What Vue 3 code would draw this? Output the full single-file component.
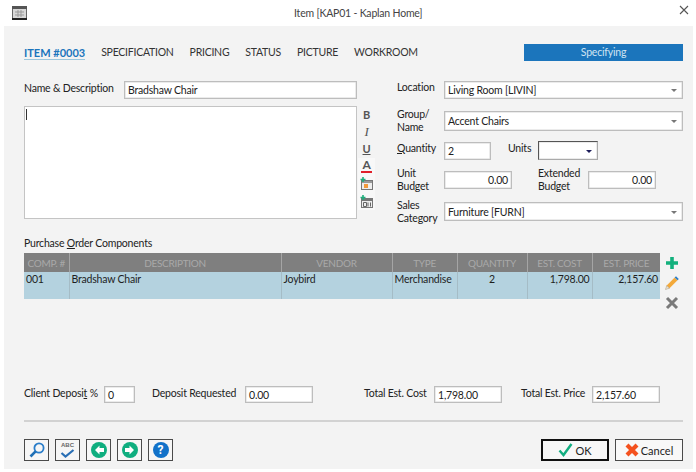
<script setup>
const tabs = ["SPECIFICATION", "PRICING", "STATUS", "PICTURE", "WORKROOM"];

const columns = [
  { label: "COMP. #", width: 45 },
  { label: "DESCRIPTION", width: 212 },
  { label: "VENDOR", width: 111 },
  { label: "TYPE", width: 65 },
  { label: "QUANTITY", width: 70 },
  { label: "EST. COST", width: 65 },
  { label: "EST. PRICE", width: 68 },
];
</script>

<template>
  <div class="window">
    <header class="titlebar">
      <div class="title-left">
        <svg width="15" height="14" viewBox="0 0 15 14">
          <rect x="0.5" y="1" width="14" height="12" fill="#d8d8d8" stroke="#666" />
          <rect x="0" y="0" width="15" height="3" fill="#555" />
          <rect x="0" y="12" width="15" height="2" fill="#222" />
          <path d="M3 6h9M3 9h9M6 4v7M9 4v7" stroke="#999" fill="none" />
        </svg>
      </div>
      <div class="title-text">Item [KAP01 - Kaplan Home]</div>
      <div class="title-right">
        <svg width="10" height="10" viewBox="0 0 10 10">
          <path d="M1 1l8 8M9 1l-8 8" stroke="#555" stroke-width="1.1" fill="none" />
        </svg>
      </div>
    </header>

    <main class="body">
      <nav class="tabs">
        <span class="tab active">ITEM #0003</span>
        <span v-for="t in tabs" :key="t" class="tab">{{ t }}</span>
        <span class="status">Specifying</span>
      </nav>

      <section class="form">
        <div class="left">
          <div class="name-row">
            <label class="name-label">Name &amp; Description</label>
            <div class="field name-input">Bradshaw Chair</div>
          </div>
          <div class="desc-row">
            <div class="textarea"><span class="caret"></span></div>
            <div class="format-tools">
              <span class="fmt bold">B</span>
              <span class="fmt ital">I</span>
              <span class="fmt under">U</span>
              <div class="fmt-lower">
                <span class="fmt color">A</span>
                <svg width="13" height="13" viewBox="0 0 13 13">
                  <rect x="1.5" y="3.5" width="11" height="9" fill="#eee" stroke="#777" />
                  <rect x="2" y="4" width="10" height="2" fill="#999" />
                  <rect x="4" y="7" width="4" height="4" fill="#f39a3c" />
                  <path d="M3 0v5M0.5 2.5h5" stroke="#1fae7c" stroke-width="1.6" />
                </svg>
                <svg width="13" height="13" viewBox="0 0 13 13">
                  <rect x="1.5" y="3.5" width="11" height="9" fill="#eee" stroke="#777" />
                  <rect x="2" y="4" width="10" height="2" fill="#777" />
                  <path d="M3.5 7.5h3v4h-3zM8 7.5v4M10.5 7.5v4" stroke="#666" fill="none" />
                  <path d="M3 0v5M0.5 2.5h5" stroke="#1fae7c" stroke-width="1.6" />
                </svg>
              </div>
            </div>
          </div>
        </div>

        <div class="right">
          <div class="row row-location">
            <label class="lbl raised">Location</label>
            <div class="field select wide">Living Room [LIVIN]<i class="arrow"></i></div>
          </div>
          <div class="row row-group">
            <label class="lbl">Group/<br />Name</label>
            <div class="field select wide tall">Accent Chairs<i class="arrow"></i></div>
          </div>
          <div class="row row-qty">
            <label class="lbl raised"><u>Q</u>uantity</label>
            <div class="field qty">2</div>
            <label class="units-lbl">Units</label>
            <div class="field select units"><i class="arrow dark"></i></div>
          </div>
          <div class="row row-budget">
            <label class="lbl">Unit<br />Budget</label>
            <div class="field money num">0.00</div>
            <label class="ext-lbl">Extended<br />Budget</label>
            <div class="field money num">0.00</div>
          </div>
          <div class="row row-sales">
            <label class="lbl">Sales<br />Category</label>
            <div class="field select wide">Furniture [FURN]<i class="arrow"></i></div>
          </div>
        </div>
      </section>

      <div class="grid-title">Purchase <u>O</u>rder Components</div>
      <div class="grid-wrap">
        <table class="grid">
          <colgroup>
            <col v-for="c in columns" :key="c.label" :style="{ width: c.width + 'px' }" />
          </colgroup>
          <thead>
            <tr>
              <th v-for="c in columns" :key="c.label">{{ c.label }}</th>
            </tr>
          </thead>
          <tbody>
            <tr>
              <td>001</td>
              <td>Bradshaw Chair</td>
              <td>Joybird</td>
              <td>Merchandise</td>
              <td class="center">2</td>
              <td class="num">1,798.00</td>
              <td class="num">2,157.60</td>
            </tr>
          </tbody>
        </table>
        <div class="grid-tools">
          <svg width="16" height="16" viewBox="0 0 16 16">
            <path d="M8 2v12M2 8h12" stroke="#12b07c" stroke-width="3.6" fill="none" />
          </svg>
          <svg width="16" height="16" viewBox="0 0 16 16">
            <path d="M1.5 14.5l1.2-4 8-8 2.8 2.8-8 8z" fill="#f3a93a" />
            <path d="M10.7 2.5l1.3-1.3 2.8 2.8-1.3 1.3z" fill="#2a7dc9" />
            <path d="M1.5 14.5l1.2-4 2.8 2.8z" fill="#e8e0d0" stroke="#999" stroke-width="0.4" />
          </svg>
          <svg width="16" height="16" viewBox="0 0 16 16">
            <path d="M3 3l10 10M13 3L3 13" stroke="#7a7a7a" stroke-width="3" fill="none" />
          </svg>
        </div>
      </div>

      <div class="totals">
        <label class="client-lbl">Client Deposi<u>t</u> %</label>
        <div class="field pct">0</div>
        <label class="deposit-lbl">Deposit Requested</label>
        <div class="field total">0.00</div>
        <label class="cost-lbl">Total Est. Cost</label>
        <div class="field total">1,798.00</div>
        <label class="price-lbl">Total Est. Price</label>
        <div class="field total">2,157.60</div>
      </div>

      <hr class="divider" />

      <footer class="footer">
        <button class="tool">
          <svg width="18" height="18" viewBox="0 0 18 18">
            <circle cx="11" cy="7" r="4.6" fill="none" stroke="#2a7dc9" stroke-width="1.8" />
            <path d="M7.6 10.4L2.5 15.5" stroke="#1f6fb5" stroke-width="2.6" />
          </svg>
        </button>
        <button class="tool abc">
          <span class="abc-text">ABC</span>
          <svg width="15" height="9" viewBox="0 0 15 9">
            <path d="M1.5 4l4 3.5 8-6.5" stroke="#2a6fb5" stroke-width="2.2" fill="none" />
          </svg>
        </button>
        <button class="tool">
          <svg width="18" height="18" viewBox="0 0 18 18">
            <circle cx="9" cy="9" r="8" fill="#0fae7f" />
            <path d="M9.500 4.500L5 9l4.500 4.500V11H14V7H9.500z" fill="#fff" />
          </svg>
        </button>
        <button class="tool">
          <svg width="18" height="18" viewBox="0 0 18 18">
            <circle cx="9" cy="9" r="8" fill="#0fae7f" />
            <path d="M8.500 4.500L13 9l-4.500 4.500V11H4V7h4.500z" fill="#fff" />
          </svg>
        </button>
        <button class="tool">
          <span class="help">?</span>
        </button>
        <div class="spacer"></div>
        <button class="action ok">
          <svg width="15" height="14" viewBox="0 0 15 14">
            <path d="M1.500 7.500l4 4.500 8-11" stroke="#12ae80" stroke-width="2.400" fill="none" />
          </svg>
          <span>OK</span>
        </button>
        <button class="action cancel">
          <svg width="14" height="14" viewBox="0 0 14 14">
            <path d="M2 2l10 10M12 2L2 12" stroke="#f4511e" stroke-width="4.200" fill="none" />
          </svg>
          <span>Cancel</span>
        </button>
      </footer>
    </main>
  </div>
</template>

<style>
html,
body {
  margin: 0;
  background: #fff;
}
</style>

<style scoped>
.window {
  width: 696px;
  height: 472px;
  background: #fff;
  font-family: Lato, Roboto, "Liberation Sans", sans-serif;
  font-size: 10.5px;
  letter-spacing: -0.2px;
  color: #222;
  overflow: hidden;
}

.titlebar {
  height: 26px;
  display: grid;
  grid-template-columns: 294px auto 1fr;
  align-items: center;
}
.title-left {
  padding-left: 12px;
  display: flex;
}
.title-text {
  color: #444;
}
.title-right {
  display: flex;
  justify-content: flex-end;
  padding-right: 7px;
  margin-top: -7px;
}

.body {
  margin: 0 3px 0 4px;
  height: 443px;
  background: #f3f3f3;
  padding: 0 10px 0 20px;
  box-sizing: border-box;
}

.tabs {
  display: flex;
  align-items: center;
  height: 18px;
  padding-top: 17px;
  letter-spacing: -0.25px;
}
.tab {
  margin-right: 16px;
  color: #333;
  white-space: nowrap;
}
.tab.active {
  color: #1b75bc;
  font-size: 11px;
  letter-spacing: 0;
  font-weight: 700;
  border-bottom: 1px solid #9cc7dd;
  margin-top: 2px;
}
.status {
  margin-left: auto;
  width: 159px;
  height: 17px;
  line-height: 17px;
  background: #1b75bc;
  color: #cfe3f2;
  text-align: center;
  letter-spacing: -0.2px;
}

.form {
  display: flex;
  margin-top: 20px;
}
.left {
  width: 333px;
}
.name-row {
  display: flex;
  align-items: center;
  height: 17px;
}
.name-label {
  width: 100px;
  margin-top: -4px;
  white-space: nowrap;
}
.name-input {
  width: 233px;
  height: 17px;
}
.desc-row {
  display: flex;
  margin-top: 8px;
}
.textarea {
  flex: 0 0 333px;
  height: 113px;
  box-sizing: border-box;
  background: #fff;
  border: 1px solid #c4c4c4;
  padding: 2px 1px;
}
.caret {
  display: block;
  width: 1px;
  height: 11px;
  background: #333;
}
.format-tools {
  flex: 0 0 17px;
  margin-left: 1px;
  display: flex;
  flex-direction: column;
  align-items: center;
}
.fmt {
  height: 17px;
  line-height: 17px;
  font-size: 11px;
  color: #555;
  font-weight: 700;
}
.fmt.ital {
  font-family: "Liberation Serif", serif;
  font-style: italic;
  font-weight: 400;
  font-size: 13px;
}
.fmt.under {
  text-decoration: underline;
}
.fmt-lower {
  width: 17px;
  margin-top: 1px;
  background: #f8f8f8;
  display: flex;
  flex-direction: column;
  align-items: center;
  gap: 5px;
  padding-bottom: 2px;
}
.fmt.color {
  height: 15px;
  line-height: 14px;
  font-size: 12px;
  border-bottom: 2px solid #e0202a;
  box-sizing: border-box;
  padding: 0 1px;
  margin-bottom: -1px;
}

.right {
  width: 286px;
  margin-left: 40px;
}
.row {
  display: flex;
  align-items: center;
}
.row-location {
  height: 18px;
}
.row-group {
  margin-top: 12px;
  height: 20px;
}
.row-qty {
  margin-top: 10px;
  height: 19px;
}
.row-budget {
  margin-top: 11px;
  height: 18px;
}
.row-sales {
  margin-top: 13px;
  height: 19px;
}
.lbl {
  width: 47px;
  flex: none;
  line-height: 13px;
}
.lbl.raised {
  margin-top: -5px;
}
.field {
  box-sizing: border-box;
  background: #fff;
  border: 1px solid #bdbdbd;
  box-shadow: inset 0 0 0 0.5px #d8d8d8;
  padding: 0 3px;
  display: flex;
  align-items: center;
  white-space: nowrap;
  height: 18px;
}
.select {
  position: relative;
}
.wide {
  width: 239px;
}
.tall {
  height: 20px;
}
.row-sales .wide {
  height: 19px;
}
.arrow {
  position: absolute;
  right: 5px;
  top: 50%;
  margin-top: -1px;
  border-left: 3px solid transparent;
  border-right: 3px solid transparent;
  border-top: 3px solid #777;
}
.arrow.dark {
  border-top-color: #1d1d5a;
}
.qty {
  width: 47px;
}
.units-lbl {
  margin-left: 17px;
  width: 30px;
  margin-top: -5px;
}
.units {
  width: 60px;
  height: 19px;
  border-color: #555 #aaa #aaa #555;
}
.money {
  width: 68px;
}
.num {
  justify-content: flex-end;
  text-align: right;
}
.ext-lbl {
  margin-left: 26px;
  width: 50px;
  line-height: 13px;
}

.grid-title {
  margin-top: 16px;
  height: 16px;
  line-height: 13px;
  color: #222;
}
.grid-wrap {
  display: flex;
  align-items: flex-start;
}
.grid {
  width: 636px;
  table-layout: fixed;
  border-collapse: collapse;
}
.grid th {
  height: 19px;
  padding: 0;
  background: #7f7f7f;
  color: #a9a9a9;
  font-weight: 400;
  font-size: 10px;
  letter-spacing: -0.3px;
  border-right: 1px solid #a5a5a5;
  white-space: nowrap;
  overflow: hidden;
}
.grid td {
  height: 27px;
  padding: 0 2px 8px;
  box-sizing: border-box;
  background: #b4d2df;
  color: #1e1e1e;
  border-right: 1px solid #a5bcc6;
  white-space: nowrap;
  vertical-align: top;
  line-height: 15px;
}
.grid th:last-child,
.grid td:last-child {
  border-right: none;
}
.grid td.center {
  text-align: center;
}
.grid td.num {
  text-align: right;
}
.grid-tools {
  margin-left: 4px;
  display: flex;
  flex-direction: column;
  padding-top: 2px;
  gap: 4px;
}

.totals {
  margin-top: 75px;
  display: flex;
  align-items: center;
  height: 17px;
}
.totals label {
  white-space: nowrap;
  margin-top: -4px;
}
.client-lbl {
  width: 74px;
}
.pct {
  margin-left: 6px;
  width: 31px;
  height: 17px;
}
.deposit-lbl {
  margin-left: 17px;
  width: 93px;
}
.total {
  width: 68px;
  height: 17px;
}
.cost-lbl {
  margin-left: 51px;
  width: 70px;
}
.price-lbl {
  margin-left: 19px;
  width: 71px;
}

.divider {
  margin: 17px 0 0;
  width: 659px;
  height: 2px;
  border: none;
  background: #d2d2d2;
}

.footer {
  display: flex;
  margin-top: 17px;
  gap: 6px;
  width: 659px;
}
.tool {
  width: 25px;
  height: 22px;
  padding: 0;
  box-sizing: border-box;
  background: #f6f6f6;
  border: 1px solid #4a4a4a;
  display: flex;
  align-items: center;
  justify-content: center;
}
.abc {
  flex-direction: column;
  gap: 0;
}
.abc-text {
  font-size: 6px;
  line-height: 7px;
  color: #666;
  font-weight: 700;
}
.help {
  width: 16px;
  height: 16px;
  border-radius: 50%;
  background: #1272c9;
  color: #fff;
  font-family: Roboto, sans-serif;
  font-size: 12px;
  font-weight: 700;
  line-height: 16px;
  text-align: center;
}
.spacer {
  flex: 1;
}
.action {
  width: 68px;
  height: 22px;
  padding: 0;
  box-sizing: border-box;
  background: #f8f8f8;
  border: 1px solid #4a4a4a;
  display: flex;
  align-items: center;
  justify-content: center;
  gap: 2px;
  font-family: inherit;
  font-size: 11px;
  color: #222;
}
.action.ok {
  border: 2px solid #111;
}
</style>
